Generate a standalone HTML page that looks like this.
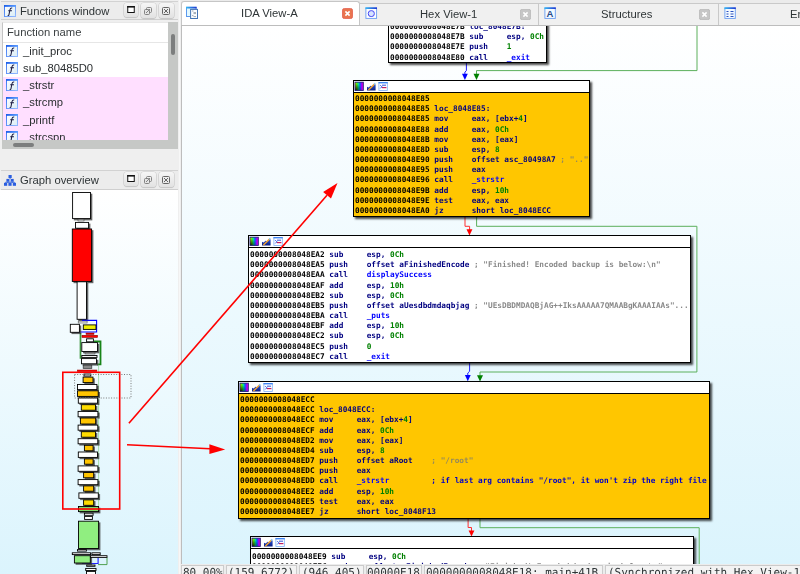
<!DOCTYPE html><html><head><meta charset="utf-8"><title>IDA</title><style>
*{box-sizing:content-box}
html,body{margin:0;padding:0}
body{width:800px;height:574px;position:relative;overflow:hidden;background:#efefef;font-family:"Liberation Sans",sans-serif;color:#2e3436}
.abs{position:absolute}
i{font-style:normal}
#gv{position:absolute;left:182px;top:26px;width:618px;box-shadow:-1px 0 0 #bdbdbd;height:539px;overflow:hidden;background:linear-gradient(#ffffff,#dbf4fd)}
.blk{position:absolute;border:1px solid #000;box-shadow:2px 2px 2px 0 rgba(0,0,0,.72);overflow:hidden}
.hd{position:absolute;left:0;top:0;right:0;height:11px;background:#fff;border-bottom:1px solid #000}
.hd svg{position:absolute;left:-.5px;top:0}
pre.code{will-change:transform;position:absolute;left:0.6px;top:12.9px;margin:0;font:bold 7.751px/10.17px "DejaVu Sans Mono","Liberation Mono",monospace;white-space:pre;text-rendering:geometricPrecision;color:#000}
.a{color:#000}.n{color:#000080}.d{color:#008000}.f{color:#0000ff}.g{color:#8a8a8a}.u{color:#0000c8}
.yel .g{color:#968a5a}
.t11{font-family:"Liberation Sans",sans-serif;white-space:pre;color:#2e3436;will-change:transform}
.ttl{background:#ececec;border-top:1px solid #d2d2d2;border-bottom:1px solid #cfcfcf}
.btn{width:13.5px;height:13.5px;border-radius:3px;background:linear-gradient(#f6f6f6,#e2e2e2);box-shadow:0 0 0 .6px #c9c9c9,0 1px 1px rgba(0,0,0,.18)}
.b15{width:14.5px;height:15px}.b15 svg{position:absolute;left:.3px;top:.6px}
.tab{position:absolute;top:3px;height:22px;background:#f0f0f0;border-top:1px solid #c9c9c9;border-right:1px solid #c9c9c9;box-sizing:border-box}
.tabt{will-change:transform;position:absolute;top:6.6px;font-size:11.25px;line-height:14px;white-space:pre;color:#2e3436}
.sc{position:absolute;top:565px;height:12px;background:#f3f3f3;border:1px solid #cbcbcb;box-sizing:border-box}
.st{will-change:transform;position:absolute;top:567px;font:11px/12px "DejaVu Sans Mono","Liberation Mono",monospace;white-space:pre;color:#2e3436;text-rendering:geometricPrecision}

</style></head><body>
<svg width="0" height="0" style="position:absolute"><defs>
<linearGradient id="rb" x1="0" x2="1" y1="0" y2="0"><stop offset="0" stop-color="#ffe000"/><stop offset=".2" stop-color="#60f000"/><stop offset=".42" stop-color="#00e0a0"/><stop offset=".6" stop-color="#0060ff"/><stop offset=".8" stop-color="#a000ff"/><stop offset="1" stop-color="#ff00c0"/></linearGradient>
<radialGradient id="dk" cx="0" cy="1" r=".85"><stop offset="0" stop-color="#000" stop-opacity="1"/><stop offset=".4" stop-color="#000" stop-opacity=".55"/><stop offset="1" stop-color="#000" stop-opacity="0"/></radialGradient>
<linearGradient id="ch" x1="0" x2="0" y1="0" y2="1"><stop offset="0" stop-color="#2a5ae0"/><stop offset="1" stop-color="#0c1c80"/></linearGradient>
<g id="ic3">
<rect x="1" y="1.2" width="8.3" height="8.2" fill="url(#rb)"/><rect x="1" y="1.2" width="8.3" height="8.2" fill="url(#dk)"/><rect x="1" y="1.2" width="8.3" height="8.2" fill="none" stroke="#1c1c78" stroke-width=".9"/>
<path d="M13 9.6V5.8l1.6.6 2-1.6 1.6.4 2.4-2.2 1 .6V9.6z" fill="url(#ch)"/><path d="M14.2 8.3l5.6-5.5 1.1 1-5.4 5.3-1.6.5z" fill="#f0a030"/><path d="M19.6 3l1-1.2 1.2 1-1 1.2z" fill="#8cc8e8"/>
<rect x="24.9" y="1.5" width="8.4" height="7.9" fill="#fff" stroke="#7eaef8" stroke-width=".8"/><rect x="24.5" y="1" width="9.2" height="1.4" fill="#3f86f4"/><path d="M26.3 4.2l1.6 1.6-1.6 1.6" fill="none" stroke="#2a50e0" stroke-width="1"/><path d="M28 4.2h4" stroke="#4060e0" stroke-width="1.1"/><path d="M28 6.6h4.4" stroke="#c02060" stroke-width="1.2"/>
</g>
<linearGradient id="iv" x1="0" x2="1" y1="0" y2="0"><stop offset="0" stop-color="#34bdf2"/><stop offset="1" stop-color="#2234d0"/></linearGradient><linearGradient id="fb" x1="0" x2="0" y1="0" y2="1"><stop offset="0" stop-color="#1c6cf0"/><stop offset="1" stop-color="#6aa8ff"/></linearGradient>
<linearGradient id="fs" x1="0" x2="1" y1="0" y2="1"><stop offset="0" stop-color="#2a6cf0"/><stop offset="1" stop-color="#8fb6ff"/></linearGradient><linearGradient id="ft" x1="0" x2="1" y1="0" y2="0"><stop offset="0" stop-color="#1c5ee8"/><stop offset="1" stop-color="#5c9cff"/></linearGradient><linearGradient id="fi" x1="0" x2="1" y1="0" y2="1"><stop offset="0" stop-color="#ffffff"/><stop offset="1" stop-color="#d8ecf6"/></linearGradient>
<g id="icf"><rect x=".5" y=".5" width="12" height="12" fill="url(#fi)" stroke="url(#fs)" stroke-width="1"/><rect x="0" y="0" width="13" height="2" fill="url(#ft)"/><path d="M8.9 3.2c-1.5-.3-2.2.5-2.5 2l-1 5.2c-.2.9-.6 1.1-1.4.9M4.6 6.2h4" fill="none" stroke="#1a1a40" stroke-width="1.1"/></g>
<g id="icg" fill="#2a5ee0"><rect x="4.5" y="0" width="3.2" height="3"/><rect x="2.4" y="3.9" width="3" height="2.8"/><rect x="6.7" y="3.9" width="3" height="2.8"/><rect x="0" y="7.8" width="3.2" height="3"/><rect x="4.4" y="7.8" width="3.2" height="3"/><rect x="8.8" y="7.8" width="3.2" height="3"/><path d="M6.1 3v1M3.9 6.7v1.2M8.2 6.7v1.2M1.6 7.8v-.6h8.8v.6" stroke="#2a5ee0" stroke-width=".9" fill="none"/></g>
</defs></svg>

<div class="abs" style="left:0;top:0;width:181px;height:574px;background:#efefef"></div>
<!-- functions title -->
<div class="abs ttl" style="left:1px;top:1px;width:177px;height:17px"></div>
<svg class="abs" style="left:4px;top:5px" width="12" height="12" viewBox="0 0 13 13"><use href="#icf"/></svg>
<div class="abs t11" style="left:19.5px;top:4px;font-size:11.25px;line-height:14px">Functions window</div>
<div class="abs btn" style="left:124px;top:3px"><svg width="14" height="14" viewBox="0 0 14 14"><rect x="3.75" y="3.5" width="6.5" height="6" fill="#fff" stroke="#111" stroke-width="1"/><rect x="3.25" y="3" width="7.5" height="1.6" fill="#111"/></svg></div>
<div class="abs btn b15" style="left:141px;top:3px"><svg width="14" height="14" viewBox="0 0 14 14"><g fill="none" stroke="#777" stroke-width=".9"><rect x="5.5" y="3.5" width="5" height="5" rx="1"/><rect x="3.5" y="5.5" width="5" height="5" rx="1" fill="#e4e4e4"/><path d="M5 9l4-4"/></g></svg></div>
<div class="abs btn b15" style="left:159px;top:3px"><svg width="14" height="14" viewBox="0 0 14 14"><g fill="none" stroke="#666" stroke-width="1"><rect x="3.5" y="3.5" width="7" height="7" rx="1"/><path d="M5 5l4 4M9 5l-4 4"/></g></svg></div>
<!-- table -->
<div class="abs" style="left:2px;top:22px;width:176px;height:127px;background:#fff;border-left:1px solid #c4c4c4;border-top:1px solid #e8e8e8;box-sizing:border-box"></div>
<div class="abs" style="left:3px;top:77px;width:165px;height:63px;background:#ffdfff"></div>
<div class="abs" style="left:3px;top:42px;width:165px;height:1px;background:#e6e6e6"></div>
<div class="abs t11" style="left:7px;top:25px;font-size:11.25px;line-height:14px;color:#3a3f41">Function name</div>
<svg class="abs" style="left:6px;top:45px" width="12" height="12" viewBox="0 0 13 13"><use href="#icf"/></svg>
<div class="abs t11" style="left:22.6px;top:43.7px;font-size:11.25px;line-height:14px;color:#2a2e30">_init_proc</div>
<svg class="abs" style="left:6px;top:62.2px" width="12" height="12" viewBox="0 0 13 13"><use href="#icf"/></svg>
<div class="abs t11" style="left:22.6px;top:60.9px;font-size:11.25px;line-height:14px;color:#2a2e30">sub_80485D0</div>
<svg class="abs" style="left:6px;top:79.4px" width="12" height="12" viewBox="0 0 13 13"><use href="#icf"/></svg>
<div class="abs t11" style="left:22.6px;top:78.1px;font-size:11.25px;line-height:14px;color:#2a2e30">_strstr</div>
<svg class="abs" style="left:6px;top:96.6px" width="12" height="12" viewBox="0 0 13 13"><use href="#icf"/></svg>
<div class="abs t11" style="left:22.6px;top:95.3px;font-size:11.25px;line-height:14px;color:#2a2e30">_strcmp</div>
<svg class="abs" style="left:6px;top:113.8px" width="12" height="12" viewBox="0 0 13 13"><use href="#icf"/></svg>
<div class="abs t11" style="left:22.6px;top:112.5px;font-size:11.25px;line-height:14px;color:#2a2e30">_printf</div>
<svg class="abs" style="left:6px;top:131px" width="12" height="12" viewBox="0 0 13 13"><use href="#icf"/></svg>
<div class="abs t11" style="left:22.6px;top:129.7px;font-size:11.25px;line-height:14px;color:#2a2e30">_strcspn</div>
<div class="abs" style="left:168px;top:22px;width:10px;height:118px;background:#c6c8c6"></div>
<div class="abs" style="left:171px;top:34px;width:4px;height:21px;background:#7c7e7e;border-radius:2px"></div>
<div class="abs" style="left:2px;top:140px;width:176px;height:9px;background:#c6c8c6"></div>
<div class="abs" style="left:13px;top:142.5px;width:20.5px;height:4.5px;background:#7c7e7e;border-radius:2.2px"></div>
<!-- overview title -->
<div class="abs ttl" style="left:1px;top:170px;width:177px;height:18px"></div>
<svg class="abs" style="left:4px;top:175px" width="12" height="11" viewBox="0 0 12 11"><use href="#icg"/></svg>
<div class="abs t11" style="left:19.5px;top:173px;font-size:11.25px;line-height:14px">Graph overview</div>
<div class="abs btn" style="left:124px;top:172px"><svg width="14" height="14" viewBox="0 0 14 14"><rect x="3.75" y="3.5" width="6.5" height="6" fill="#fff" stroke="#111" stroke-width="1"/><rect x="3.25" y="3" width="7.5" height="1.6" fill="#111"/></svg></div>
<div class="abs btn b15" style="left:141px;top:172px"><svg width="14" height="14" viewBox="0 0 14 14"><g fill="none" stroke="#777" stroke-width=".9"><rect x="5.5" y="3.5" width="5" height="5" rx="1"/><rect x="3.5" y="5.5" width="5" height="5" rx="1" fill="#e4e4e4"/><path d="M5 9l4-4"/></g></svg></div>
<div class="abs btn b15" style="left:159px;top:172px"><svg width="14" height="14" viewBox="0 0 14 14"><g fill="none" stroke="#666" stroke-width="1"><rect x="3.5" y="3.5" width="7" height="7" rx="1"/><path d="M5 5l4 4M9 5l-4 4"/></g></svg></div>
<!-- overview canvas -->
<div id="ov" class="abs" style="left:0;top:190px;width:178px;height:384px;background:linear-gradient(#ffffff,#dbf4fd);overflow:hidden">
<svg class="abs" style="left:0;top:0" width="178" height="384" viewBox="0 190 178 384"><rect x="73.8" y="193.7" width="18.5" height="26.7" fill="#333" opacity=".75"/><rect x="72.6" y="192.5" width="17.9" height="26.1" fill="#fff" stroke="#000" stroke-width="0.9"/><rect x="78.0" y="219.3" width="6.0" height="1.7" fill="#ddd" stroke="#444" stroke-width="0.6"/><rect x="76.7" y="223.6" width="13.7" height="6.4" fill="#333" opacity=".75"/><rect x="75.5" y="222.4" width="13.1" height="5.8" fill="#fff" stroke="#000" stroke-width="0.9"/><rect x="73.5" y="230.2" width="19.9" height="53.0" fill="#333" opacity=".75"/><rect x="72.3" y="229.0" width="19.3" height="52.4" fill="#ff0000" stroke="#000" stroke-width="0.9"/><rect x="78.3" y="283.0" width="10.0" height="38.1" fill="#333" opacity=".75"/><rect x="77.1" y="281.8" width="9.4" height="37.5" fill="#fff" stroke="#000" stroke-width="0.9"/><polyline points="82.0,320.4 96.6,320.4 96.6,332.0 74.0,332.0" fill="none" stroke="#0000ff" stroke-width="1.1"/><polyline points="80.5,333.0 80.5,358.0 82.0,358.0" fill="none" stroke="#3c943c" stroke-width="1.7"/><polyline points="94.0,341.5 100.5,341.5 100.5,364.3 97.0,364.3" fill="none" stroke="#188418" stroke-width="1.8"/><polyline points="97.0,365.0 98.6,365.0 98.6,506.0" fill="none" stroke="#a6dcae" stroke-width="1"/><rect x="78.2" y="321.1" width="8.9" height="1.9" fill="#eee" stroke="#555" stroke-width="0.6"/><rect x="71.5" y="325.5" width="9.7" height="8.6" fill="#333" opacity=".75"/><rect x="70.3" y="324.3" width="9.1" height="8.0" fill="#fff" stroke="#000" stroke-width="0.9"/><rect x="83.3" y="324.9" width="12.7" height="4.5" fill="#f0f000" stroke="#000" stroke-width="0.9"/><rect x="86.0" y="333.0" width="8.0" height="1.5" fill="#e00000" stroke="#900" stroke-width="0.5"/><rect x="82.0" y="335.3" width="15.5" height="2.1" fill="#ff0000" stroke="#800" stroke-width="0.6"/><rect x="86.6" y="338.8" width="6.8" height="3.0" fill="#fff" stroke="#000" stroke-width="0.9"/><rect x="83.0" y="343.8" width="16.3" height="9.5" fill="#333" opacity=".75"/><rect x="81.8" y="342.6" width="15.7" height="8.9" fill="#fff" stroke="#000" stroke-width="0.9"/><rect x="85.0" y="352.3" width="10.0" height="1.7" fill="#aaa" stroke="#444" stroke-width="0.6"/><rect x="81.8" y="355.5" width="15.2" height="1.9" fill="#fff" stroke="#000" stroke-width="0.9"/><rect x="82.7" y="359.8" width="15.6" height="5.8" fill="#333" opacity=".75"/><rect x="81.5" y="358.6" width="15.0" height="5.2" fill="#fff" stroke="#000" stroke-width="0.9"/><rect x="83.2" y="365.2" width="8.6" height="3.2" fill="#888" stroke="#333" stroke-width="0.7"/><rect x="77.3" y="370.0" width="19.6" height="1.6" fill="#ff0000" stroke="#900" stroke-width="0.5"/><rect x="84.0" y="374.0" width="6.8" height="2.0" fill="#fff" stroke="#000" stroke-width="0.9"/><rect x="84.3" y="378.3" width="10.5" height="6.1" fill="#333" opacity=".75"/><rect x="83.1" y="377.1" width="9.9" height="5.5" fill="#ffc400" stroke="#000" stroke-width="0.9"/><rect x="78.7" y="385.7" width="20.0" height="5.7" fill="#333" opacity=".75"/><rect x="77.5" y="384.5" width="19.4" height="5.1" fill="#fff" stroke="#000" stroke-width="0.9"/><rect x="78.7" y="392.0" width="21.3" height="6.2" fill="#333" opacity=".75"/><rect x="77.5" y="390.8" width="20.7" height="5.6" fill="#ffc400" stroke="#000" stroke-width="0.9"/><rect x="79.5" y="399.2" width="19.9" height="5.8" fill="#333" opacity=".75"/><rect x="78.3" y="398.0" width="19.3" height="5.2" fill="#fff" stroke="#000" stroke-width="0.9"/><rect x="82.5" y="405.9" width="14.8" height="6.1" fill="#333" opacity=".75"/><rect x="81.3" y="404.7" width="14.2" height="5.5" fill="#ffdc00" stroke="#000" stroke-width="0.9"/><rect x="79.3" y="412.6" width="20.4" height="6.0" fill="#333" opacity=".75"/><rect x="78.1" y="411.4" width="19.8" height="5.4" fill="#fff" stroke="#000" stroke-width="0.9"/><rect x="81.6" y="419.2" width="15.9" height="6.6" fill="#333" opacity=".75"/><rect x="80.4" y="418.0" width="15.3" height="6.0" fill="#ffc400" stroke="#000" stroke-width="0.9"/><rect x="79.3" y="426.3" width="20.3" height="5.7" fill="#333" opacity=".75"/><rect x="78.1" y="425.1" width="19.7" height="5.1" fill="#fff" stroke="#000" stroke-width="0.9"/><rect x="82.5" y="432.9" width="14.8" height="6.1" fill="#333" opacity=".75"/><rect x="81.3" y="431.7" width="14.2" height="5.5" fill="#ffdc00" stroke="#000" stroke-width="0.9"/><rect x="79.3" y="439.9" width="20.3" height="5.7" fill="#333" opacity=".75"/><rect x="78.1" y="438.7" width="19.7" height="5.1" fill="#fff" stroke="#000" stroke-width="0.9"/><rect x="85.6" y="446.5" width="9.3" height="6.1" fill="#333" opacity=".75"/><rect x="84.4" y="445.3" width="8.7" height="5.5" fill="#ffc400" stroke="#000" stroke-width="0.9"/><rect x="79.5" y="453.2" width="19.8" height="6.0" fill="#333" opacity=".75"/><rect x="78.3" y="452.0" width="19.2" height="5.4" fill="#fff" stroke="#000" stroke-width="0.9"/><rect x="85.6" y="460.1" width="9.3" height="5.9" fill="#333" opacity=".75"/><rect x="84.4" y="458.9" width="8.7" height="5.3" fill="#ffc400" stroke="#000" stroke-width="0.9"/><rect x="79.3" y="467.1" width="20.4" height="6.0" fill="#333" opacity=".75"/><rect x="78.1" y="465.9" width="19.8" height="5.4" fill="#fff" stroke="#000" stroke-width="0.9"/><rect x="84.8" y="473.7" width="10.7" height="5.9" fill="#333" opacity=".75"/><rect x="83.6" y="472.5" width="10.1" height="5.3" fill="#ffc400" stroke="#000" stroke-width="0.9"/><rect x="79.3" y="480.8" width="20.4" height="5.7" fill="#333" opacity=".75"/><rect x="78.1" y="479.6" width="19.8" height="5.1" fill="#fff" stroke="#000" stroke-width="0.9"/><rect x="84.8" y="487.1" width="10.7" height="5.9" fill="#333" opacity=".75"/><rect x="83.6" y="485.9" width="10.1" height="5.3" fill="#ffc400" stroke="#000" stroke-width="0.9"/><rect x="80.1" y="494.1" width="20.0" height="6.0" fill="#333" opacity=".75"/><rect x="78.9" y="492.9" width="19.4" height="5.4" fill="#fff" stroke="#000" stroke-width="0.9"/><rect x="84.8" y="501.1" width="10.7" height="6.0" fill="#333" opacity=".75"/><rect x="83.6" y="499.9" width="10.1" height="5.4" fill="#ffdc00" stroke="#000" stroke-width="0.9"/><rect x="79.7" y="507.7" width="20.7" height="5.7" fill="#333" opacity=".75"/><rect x="78.5" y="506.5" width="20.1" height="5.1" fill="#80d868" stroke="#000" stroke-width="0.9"/><rect x="84.4" y="513.2" width="8.7" height="2.1" fill="#fff" stroke="#000" stroke-width="0.9"/><rect x="84.6" y="516.4" width="7.8" height="3.0" fill="#fff" stroke="#000" stroke-width="0.9"/><rect x="79.7" y="522.4" width="20.7" height="27.9" fill="#333" opacity=".75"/><rect x="78.5" y="521.2" width="20.1" height="27.3" fill="#90ee80" stroke="#000" stroke-width="0.9"/><rect x="77.5" y="549.6" width="8.9" height="1.5" fill="#fff" stroke="#000" stroke-width="0.9"/><rect x="72.3" y="552.8" width="18.3" height="1.8" fill="#fff" stroke="#000" stroke-width="0.9"/><rect x="91.9" y="552.8" width="8.3" height="1.8" fill="#fff" stroke="#000" stroke-width="0.9"/><polyline points="98.1,558.0 98.1,563.5 82.0,563.5" fill="none" stroke="#2020ff" stroke-width="1.1"/><polyline points="107.0,557.5 107.0,564.6 98.0,564.6" fill="none" stroke="#50a050" stroke-width="1"/><rect x="75.6" y="556.9" width="16.5" height="7.9" fill="#333" opacity=".75"/><rect x="74.4" y="555.7" width="15.9" height="7.3" fill="#90ee80" stroke="#000" stroke-width="0.9"/><rect x="90.4" y="555.7" width="16.6" height="1.7" fill="#fff" stroke="#000" stroke-width="0.9"/><rect x="86.7" y="565.0" width="8.3" height="1.3" fill="#fff" stroke="#000" stroke-width="0.9"/><rect x="85.7" y="568.4" width="10.3" height="2.1" fill="#fff" stroke="#000" stroke-width="0.9"/><rect x="86.5" y="571.4" width="9.0" height="4.6" fill="#fff" stroke="#000" stroke-width="0.9"/><rect x="74.6" y="374.5" width="56.4" height="23.5" fill="none" stroke="#777" stroke-width="1" stroke-dasharray="1,1.6"/><rect x="62.8" y="372.3" width="56.9" height="136.7" fill="none" stroke="#ff0000" stroke-width="1.6"/></svg>
</div>
<div class="abs" style="left:179px;top:0;width:1px;height:574px;background:#f7f7f7"></div>


<div class="abs" style="left:181px;top:0;width:619px;height:26px;background:#ebebeb"></div>
<div class="tab" style="left:360px;width:179px"></div>
<div class="tab" style="left:539px;width:180px"></div>
<div class="tab" style="left:719px;width:90px"></div>
<div class="abs" style="left:181px;top:1px;width:179px;height:25px;background:#fff;border:1px solid #c6c6c6;border-bottom:0;border-radius:3px 3px 0 0;box-sizing:border-box"></div>
<div class="abs" style="left:181px;top:25px;width:619px;height:1px;background:#bdbdbd"></div>
<!-- IDA view icon -->
<svg class="abs" style="left:186px;top:6px" width="13" height="14" viewBox="0 0 13 14"><rect x=".5" y="1.3" width="9.6" height="9.2" fill="#e2f8ff" stroke="#5a98ee" stroke-width="1"/><rect x="0" y=".8" width="10.6" height="1.7" fill="url(#iv)"/><rect x="4.6" y="3.4" width="6.9" height="9.1" fill="#fbfdff" stroke="#4474b4" stroke-width="1"/><path d="M6 5h1.5M7.5 6.6h2.5M7.5 7.6h2.5M6 9.6h1.5M7.5 10.6h2.5" stroke="#8a93a0" stroke-width=".8"/></svg>
<div class="tabt" style="left:241px;top:6.1px">IDA View-A</div>
<svg class="abs" style="left:341.6px;top:8px" width="11" height="11" viewBox="0 0 11 11"><rect x=".4" y=".4" width="10.2" height="10.2" rx="2.2" fill="#e9744f" stroke="#e2594a" stroke-width=".8"/><path d="M3.4 3.4l4.2 4.2M7.6 3.4l-4.2 4.2" stroke="#fff" stroke-width="1.6"/></svg>
<!-- hex -->
<svg class="abs" style="left:365px;top:7px" width="13" height="12" viewBox="0 0 13 12"><rect x=".9" y=".9" width="10.7" height="10.5" fill="#fdfeff" stroke="#6a9cf0" stroke-width=".9"/><rect x=".4" y=".4" width="11.6" height="1.6" fill="url(#iv)"/><rect x="3.3" y="3.7" width="6" height="5.8" rx="2.6" fill="#d8e4ff" stroke="#4444f4" stroke-width="1"/></svg>
<div class="tabt" style="left:420px">Hex View-1</div>
<svg class="abs" style="left:519.6px;top:9px" width="11" height="11" viewBox="0 0 11 11"><rect x=".3" y=".3" width="10.4" height="10.4" rx="2" fill="#c6c6c6" stroke="#b2b2b2" stroke-width=".7"/><path d="M3.4 3.4l4.2 4.2M7.6 3.4l-4.2 4.2" stroke="#fff" stroke-width="1.5"/></svg>
<!-- structures -->
<svg class="abs" style="left:544px;top:7px" width="13" height="12" viewBox="0 0 13 12"><rect x=".9" y=".9" width="10.4" height="10.5" fill="#f4faff" stroke="#6a9cf0" stroke-width=".9"/><rect x=".4" y=".4" width="11.4" height="1.6" fill="url(#iv)"/><text x="6" y="10.3" font-family="Liberation Sans, sans-serif" font-weight="bold" font-size="9.5" text-anchor="middle" fill="#234a8a">A</text></svg>
<div class="tabt" style="left:601px">Structures</div>
<svg class="abs" style="left:699.4px;top:9px" width="11" height="11" viewBox="0 0 11 11"><rect x=".3" y=".3" width="10.4" height="10.4" rx="2" fill="#c6c6c6" stroke="#b2b2b2" stroke-width=".7"/><path d="M3.4 3.4l4.2 4.2M7.6 3.4l-4.2 4.2" stroke="#fff" stroke-width="1.5"/></svg>
<!-- enums -->
<svg class="abs" style="left:724px;top:7px" width="13" height="12" viewBox="0 0 13 12"><rect x=".9" y=".9" width="10.4" height="10.5" fill="#f4faff" stroke="#6a9cf0" stroke-width=".9"/><rect x=".4" y=".4" width="11.4" height="1.6" fill="url(#iv)"/><path d="M2.5 4.5h2M2.5 7h2M2.5 9.5h2M6.5 4.5h3M6.5 7h3M6.5 9.5h3" stroke="#2a50c0" stroke-width="1.2"/></svg>
<div class="tabt" style="left:789.6px">Enums</div>

<div id="gv">

<svg class="abs" style="left:0;top:0" width="618" height="539" viewBox="182 26 618 539">
<g fill="none" stroke-width="1">
<polyline points="466.4,63 466.4,70.7 464.9,72 464.9,75" stroke="#2020ff"/>
<polygon points="462,73.7 467.8,73.7 464.9,80" fill="#0000ff"/>
<polyline points="697,26 697,70.6 476.5,70.6 476.5,75" stroke="#5cb05c"/>
<polygon points="473.5,73.7 479.5,73.7 476.5,80" fill="#008000"/>
<polyline points="465,217 465,226.3 469.6,226.3 469.6,231" stroke="#ff3030"/>
<polygon points="466.5,229.3 472.4,229.3 469.5,235.4" fill="#ff0000"/>
<polyline points="476.6,217 476.6,226.3 696.9,226.3 696.9,372 480,372 480,377" stroke="#5cb05c"/>
<polygon points="477,375.2 483,375.2 480,381.4" fill="#008000"/>
<polyline points="469.6,363 469.6,371.3 467.8,373 467.8,376" stroke="#2020ff"/>
<polygon points="464.9,375 470.7,375 467.8,381.3" fill="#0000ff"/>
<polyline points="468.1,518 468.1,527.5 471.5,527.5 471.5,532" stroke="#ff3030"/>
<polygon points="468.6,530.6 474.4,530.6 471.5,536.4" fill="#ff0000"/>
<polyline points="480,518 480,527.7 699.2,527.7 699.2,566" stroke="#5cb05c"/>
</g></svg>

<div class="blk" style="left:206px;top:-19px;width:156.5px;height:54px;background:#fff">
<div class="hd"><svg width="40" height="11" viewBox="0 0 40 11"><use href="#ic3"/></svg></div>
<pre class="code" style="left:0.6px;top:13.7px"><i class="a">0000000008048E7B</i> <i class="n">loc_8048E7B:</i>
<i class="a">0000000008048E7B</i> <i class="n">sub     </i><i class="n">esp, </i><i class="d">0Ch</i>
<i class="a">0000000008048E7E</i> <i class="n">push    </i><i class="d">1</i>
<i class="a">0000000008048E80</i> <i class="n">call    </i><i class="f">_exit</i></pre>
</div>
<div class="blk yel" style="left:171px;top:54px;width:235px;height:135.4px;background:#ffc600">
<div class="hd"><svg width="40" height="11" viewBox="0 0 40 11"><use href="#ic3"/></svg></div>
<pre class="code" style="left:0.6px;top:12.9px"><i class="a">0000000008048E85</i>
<i class="a">0000000008048E85</i> <i class="n">loc_8048E85:</i>
<i class="a">0000000008048E85</i> <i class="n">mov     </i><i class="n">eax, [ebx+</i><i class="d">4</i><i class="n">]</i>
<i class="a">0000000008048E88</i> <i class="n">add     </i><i class="n">eax, </i><i class="d">0Ch</i>
<i class="a">0000000008048E8B</i> <i class="n">mov     </i><i class="n">eax, [eax]</i>
<i class="a">0000000008048E8D</i> <i class="n">sub     </i><i class="n">esp, </i><i class="d">8</i>
<i class="a">0000000008048E90</i> <i class="n">push    </i><i class="n">offset asc_80498A7</i> <i class="g">; ".."</i>
<i class="a">0000000008048E95</i> <i class="n">push    </i><i class="n">eax</i>
<i class="a">0000000008048E96</i> <i class="n">call    </i><i class="f">_strstr</i>
<i class="a">0000000008048E9B</i> <i class="n">add     </i><i class="n">esp, </i><i class="d">10h</i>
<i class="a">0000000008048E9E</i> <i class="n">test    </i><i class="n">eax, eax</i>
<i class="a">0000000008048EA0</i> <i class="n">jz      </i><i class="n">short loc_8048ECC</i></pre>
</div>
<div class="blk" style="left:66px;top:209px;width:441px;height:126px;background:#fff">
<div class="hd"><svg width="40" height="11" viewBox="0 0 40 11"><use href="#ic3"/></svg></div>
<pre class="code" style="left:0.6px;top:13.9px"><i class="a">0000000008048EA2</i> <i class="n">sub     </i><i class="n">esp, </i><i class="d">0Ch</i>
<i class="a">0000000008048EA5</i> <i class="n">push    </i><i class="n">offset aFinishedEncode</i> <i class="g">; "Finished! Encoded backup is below:\n"</i>
<i class="a">0000000008048EAA</i> <i class="n">call    </i><i class="f">displaySuccess</i>
<i class="a">0000000008048EAF</i> <i class="n">add     </i><i class="n">esp, </i><i class="d">10h</i>
<i class="a">0000000008048EB2</i> <i class="n">sub     </i><i class="n">esp, </i><i class="d">0Ch</i>
<i class="a">0000000008048EB5</i> <i class="n">push    </i><i class="n">offset aUesdbdmdaqbjag</i> <i class="g">; "UEsDBDMDAQBjAG++IksAAAAA7QMAABgKAAAIAAs"...</i>
<i class="a">0000000008048EBA</i> <i class="n">call    </i><i class="f">_puts</i>
<i class="a">0000000008048EBF</i> <i class="n">add     </i><i class="n">esp, </i><i class="d">10h</i>
<i class="a">0000000008048EC2</i> <i class="n">sub     </i><i class="n">esp, </i><i class="d">0Ch</i>
<i class="a">0000000008048EC5</i> <i class="n">push    </i><i class="d">0</i>
<i class="a">0000000008048EC7</i> <i class="n">call    </i><i class="f">_exit</i></pre>
</div>
<div class="blk yel" style="left:56.2px;top:355px;width:469.8px;height:136px;background:#ffc600">
<div class="hd"><svg width="40" height="11" viewBox="0 0 40 11"><use href="#ic3"/></svg></div>
<pre class="code" style="left:0.9px;top:12.9px"><i class="a">0000000008048ECC</i>
<i class="a">0000000008048ECC</i> <i class="n">loc_8048ECC:</i>
<i class="a">0000000008048ECC</i> <i class="n">mov     </i><i class="n">eax, [ebx+</i><i class="d">4</i><i class="n">]</i>
<i class="a">0000000008048ECF</i> <i class="n">add     </i><i class="n">eax, </i><i class="d">0Ch</i>
<i class="a">0000000008048ED2</i> <i class="n">mov     </i><i class="n">eax, [eax]</i>
<i class="a">0000000008048ED4</i> <i class="n">sub     </i><i class="n">esp, </i><i class="d">8</i>
<i class="a">0000000008048ED7</i> <i class="n">push    </i><i class="n">offset aRoot</i>    <i class="g">; "/root"</i>
<i class="a">0000000008048EDC</i> <i class="n">push    </i><i class="n">eax</i>
<i class="a">0000000008048EDD</i> <i class="n">call    </i><i class="f">_strstr</i>         <i class="u">; if last arg contains "/root", it won't zip the right file</i>
<i class="a">0000000008048EE2</i> <i class="n">add     </i><i class="n">esp, </i><i class="d">10h</i>
<i class="a">0000000008048EE5</i> <i class="n">test    </i><i class="n">eax, eax</i>
<i class="a">0000000008048EE7</i> <i class="n">jz      </i><i class="n">short loc_8048F13</i></pre>
</div>
<div class="blk" style="left:68px;top:510px;width:441.5px;height:59px;background:#fff">
<div class="hd"><svg width="40" height="11" viewBox="0 0 40 11"><use href="#ic3"/></svg></div>
<pre class="code" style="left:0.6px;top:14.5px"><i class="a">0000000008048EE9</i> <i class="n">sub     </i><i class="n">esp, </i><i class="d">0Ch</i>
<i class="a">0000000008048EEC</i> <i class="n">push    </i><i class="n">offset aFinishedEncode</i> <i class="g">; "Finished! Encoded backup is below:\n"</i></pre>
</div>
</div>

<div class="abs" style="left:181px;top:564px;width:619px;height:10px;background:#ececec"></div>
<div class="sc" style="left:181px;width:43px"></div><div class="st" style="left:183px">80.00%</div>
<div class="sc" style="left:226px;width:71px"></div><div class="st" style="left:228.4px">(159,6772)</div>
<div class="sc" style="left:299px;width:65px"></div><div class="st" style="left:301.6px">(946,405)</div>
<div class="sc" style="left:366px;width:56px"></div><div class="st" style="left:367.4px">00000E18</div>
<div class="sc" style="left:424px;width:179px"></div><div class="st" style="left:426px">0000000008048E18: main+41B</div>
<div class="sc" style="left:605px;width:200px"></div><div class="st" style="left:607.5px">(Synchronized with Hex View-1)</div>


<svg class="abs" style="left:0;top:0;pointer-events:none" width="800" height="574" viewBox="0 0 800 574">
<g stroke="#ff0000" stroke-width="1.6" fill="#ff0000">
<line x1="128.9" y1="423.3" x2="327" y2="195.3"/>
<polygon points="337.5,183.1 323.1,191.9 331,198.5" stroke="none"/>
<line x1="127" y1="444.8" x2="210" y2="448.8"/>
<polygon points="225.2,449.5 209.4,444.2 209.4,454" stroke="none"/>
</g></svg>

</body></html>
